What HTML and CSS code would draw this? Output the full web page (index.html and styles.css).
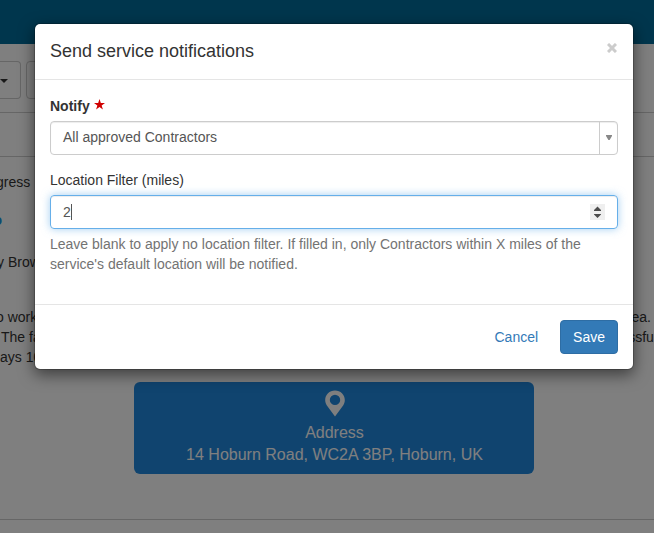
FILE: index.html
```html
<!DOCTYPE html>
<html lang="en">
<head>
<meta charset="utf-8">
<title>Send service notifications</title>
<link rel="stylesheet" href="styles.css">
</head>
<body>
<div class="page">
  <header class="navbar"></header>
  <div class="toolbar">
    <div class="tool tool-first"><span class="caret"></span></div>
    <div class="tool tool-second"></div>
  </div>
  <div class="strip"></div>
  <main class="details">
    <p class="row status">gress</p>
    <p class="row link">o</p>
    <p class="row person">y Brown</p>
    <div class="description">
      <p class="row"><span class="line-one">o work</span><span class="end-one">ea.</span></p>
      <p class="row"><span class="line-two">The fa</span><span class="end-two">ssful</span></p>
      <p class="row"><span class="line-three">ays 10</span></p>
    </div>
    <div class="address">
      <svg class="pin" width="20" height="27" viewBox="0 0 20 27"><path fill="#fff" fill-rule="evenodd" d="M10 .5C4.500.5.2 4.700.2 10c0 2 .6 3.700 1.500 5.300L10 26.500l8.300-11.200c.9-1.600 1.500-3.300 1.500-5.300C19.800 4.700 15.500.5 10 .5zM10 4.700a5.200 5.200 0 1 1 0 10.400a5.200 5.200 0 0 1 0-10.400z"/></svg>
      <div>Address</div>
      <div>14 Hoburn Road, WC2A 3BP, Hoburn, UK</div>
    </div>
  </main>
  <div class="divider"></div>
</div>
<div class="backdrop"></div>
<div class="modal" role="dialog">
  <div class="modal-header">
    <h4>Send service notifications</h4>
    <svg class="close" width="10" height="10" viewBox="0 0 10 10"><path d="M1 1l8 8M9 1L1 9" stroke="#ccc" stroke-width="3"/></svg>
  </div>
  <div class="modal-body">
    <div class="label bold">Notify
      <svg class="star" width="11" height="11" viewBox="0 0 10 10"><path fill="#d00000" d="M5 0l1.200 3.600H10L6.950 5.900 8.100 9.600 5 7.350 1.900 9.600 3.050 5.900 0 3.600h3.800z"/></svg>
    </div>
    <div class="control select">
      <span>All approved Contractors</span>
      <span class="select-arrow"><svg width="6" height="5" viewBox="0 0 6 5"><path fill="#888" d="M0 0h6v1L3.600 5H2.400L0 1z"/></svg></span>
    </div>
    <div class="label">Location Filter (miles)</div>
    <div class="control number">
      <span class="value">2</span>
      <svg class="spinner" width="15" height="16" viewBox="0 0 15 16"><path fill="#efefef" d="M0 0h15v16H0z"/><path fill="#4c4c4c" d="M4 7V6l3.500-3.500L11 6v1zM4 10h7v.5L7.500 14 4 10.500z"/></svg>
    </div>
    <p class="help">Leave blank to apply no location filter. If filled in, only Contractors within X miles of the service's default location will be notified.</p>
  </div>
  <div class="modal-footer">
    <button class="btn cancel">Cancel</button>
    <button class="btn save">Save</button>
  </div>
</div>
</body>
</html>
```
FILE: styles.css
```css
* { box-sizing: border-box; }
body {
  margin: 0;
  height: 533px;
  overflow: hidden;
  font: 14px/1.42857143 "Liberation Sans", Arial, sans-serif;
  color: #333;
  background: #fff;
}
p, h4 { margin: 0; }
.page { height: 533px; overflow: hidden; }
.navbar { height: 44px; background: #006c9a; }
.toolbar {
  display: flex;
  gap: 5px;
  height: 69px;
  padding-top: 17px;
  border-bottom: 1px solid #ccc;
}
.tool { height: 38px; border: 1px solid #ccc; border-radius: 4px; }
.tool-first { width: 21px; border-left: 0; border-radius: 0 4px 4px 0; padding-top: 17px; }
.tool-second { width: 60px; }
.caret {
  display: block;
  width: 8px;
  border: 4px solid transparent;
  border-top-color: #333;
  border-bottom: 0;
}
.strip { height: 44px; border-bottom: 1px solid #ccc; }
.details { height: 362px; padding-top: 15px; }
.row { display: flex; justify-content: space-between; height: 20px; white-space: nowrap; }
.status { text-indent: -4px; }
.link { margin-top: 18px; text-indent: -6.500px; color: #1b95e0; font-weight: 700; }
.person { margin-top: 22px; text-indent: -3px; }
.description { margin-top: 35px; }
.line-one { text-indent: -4px; }
.line-two { margin-left: 1px; }
.end-one { margin-right: 3px; }
.end-two { margin-right: -3px; }
.address {
  width: 400px;
  height: 92px;
  margin: 15px auto 0 134px;
  padding: 8px 0 0 1px;
  border-radius: 6px;
  background: #2089df;
  color: #fff;
  font-size: 16px;
  line-height: 22px;
  text-align: center;
}
.pin { display: block; margin: 0 auto 5px 190px; }
.divider { border-top: 1px solid #ccc; }
.backdrop { position: absolute; inset: 0; background: rgba(0, 0, 0, .5); }
.modal {
  position: absolute;
  top: 23px;
  left: 34px;
  width: 600px;
  border: 1px solid rgba(0, 0, 0, .2);
  border-radius: 6px;
  background: #fff;
  background-clip: padding-box;
  box-shadow: 0 5px 15px rgba(0, 0, 0, .5);
}
.modal-header {
  display: flex;
  justify-content: space-between;
  height: 56px;
  padding: 15px;
  border-bottom: 1px solid #e5e5e5;
}
.modal-header h4 { font-size: 18px; font-weight: 400; line-height: 25px; }
.close { margin: 4px 1px 0 0; }
.modal-body { padding: 15.700px 15px 15px; }
.label { height: 20px; margin-bottom: 5px; }
.bold { font-weight: 700; }
.star { margin-bottom: 1px; }
.control {
  display: flex;
  justify-content: space-between;
  align-items: center;
  height: 34px;
  margin-bottom: 15px;
  padding-left: 12px;
  border: 1px solid #ccc;
  border-radius: 4px;
  color: #555;
  box-shadow: inset 0 1px 1px rgba(0, 0, 0, .075);
}
.select > span:first-child { margin-top: -2px; }
.select-arrow {
  display: flex;
  align-items: center;
  justify-content: center;
  align-self: stretch;
  width: 18px;
  border-left: 1px solid #ccc;
}
.number {
  margin-bottom: 5px;
  padding-right: 12px;
  border-color: #66afe9;
  box-shadow: inset 0 1px 1px rgba(0, 0, 0, .075), 0 0 8px rgba(102, 175, 233, .6);
}
.value { height: 16px; line-height: 16px; border-right: 1px solid #555; }
.help { margin-bottom: 15px; color: #737373; }
.modal-footer {
  display: flex;
  justify-content: flex-end;
  gap: 9px;
  padding: 15px;
  border-top: 1px solid #e5e5e5;
}
.btn {
  height: 34px;
  padding: 6px 12px;
  border: 1px solid transparent;
  border-radius: 4px;
  font: inherit;
  background: none;
}
.cancel { color: #337ab7; }
.save { color: #fff; background: #337ab7; border-color: #2e6da4; }
```
